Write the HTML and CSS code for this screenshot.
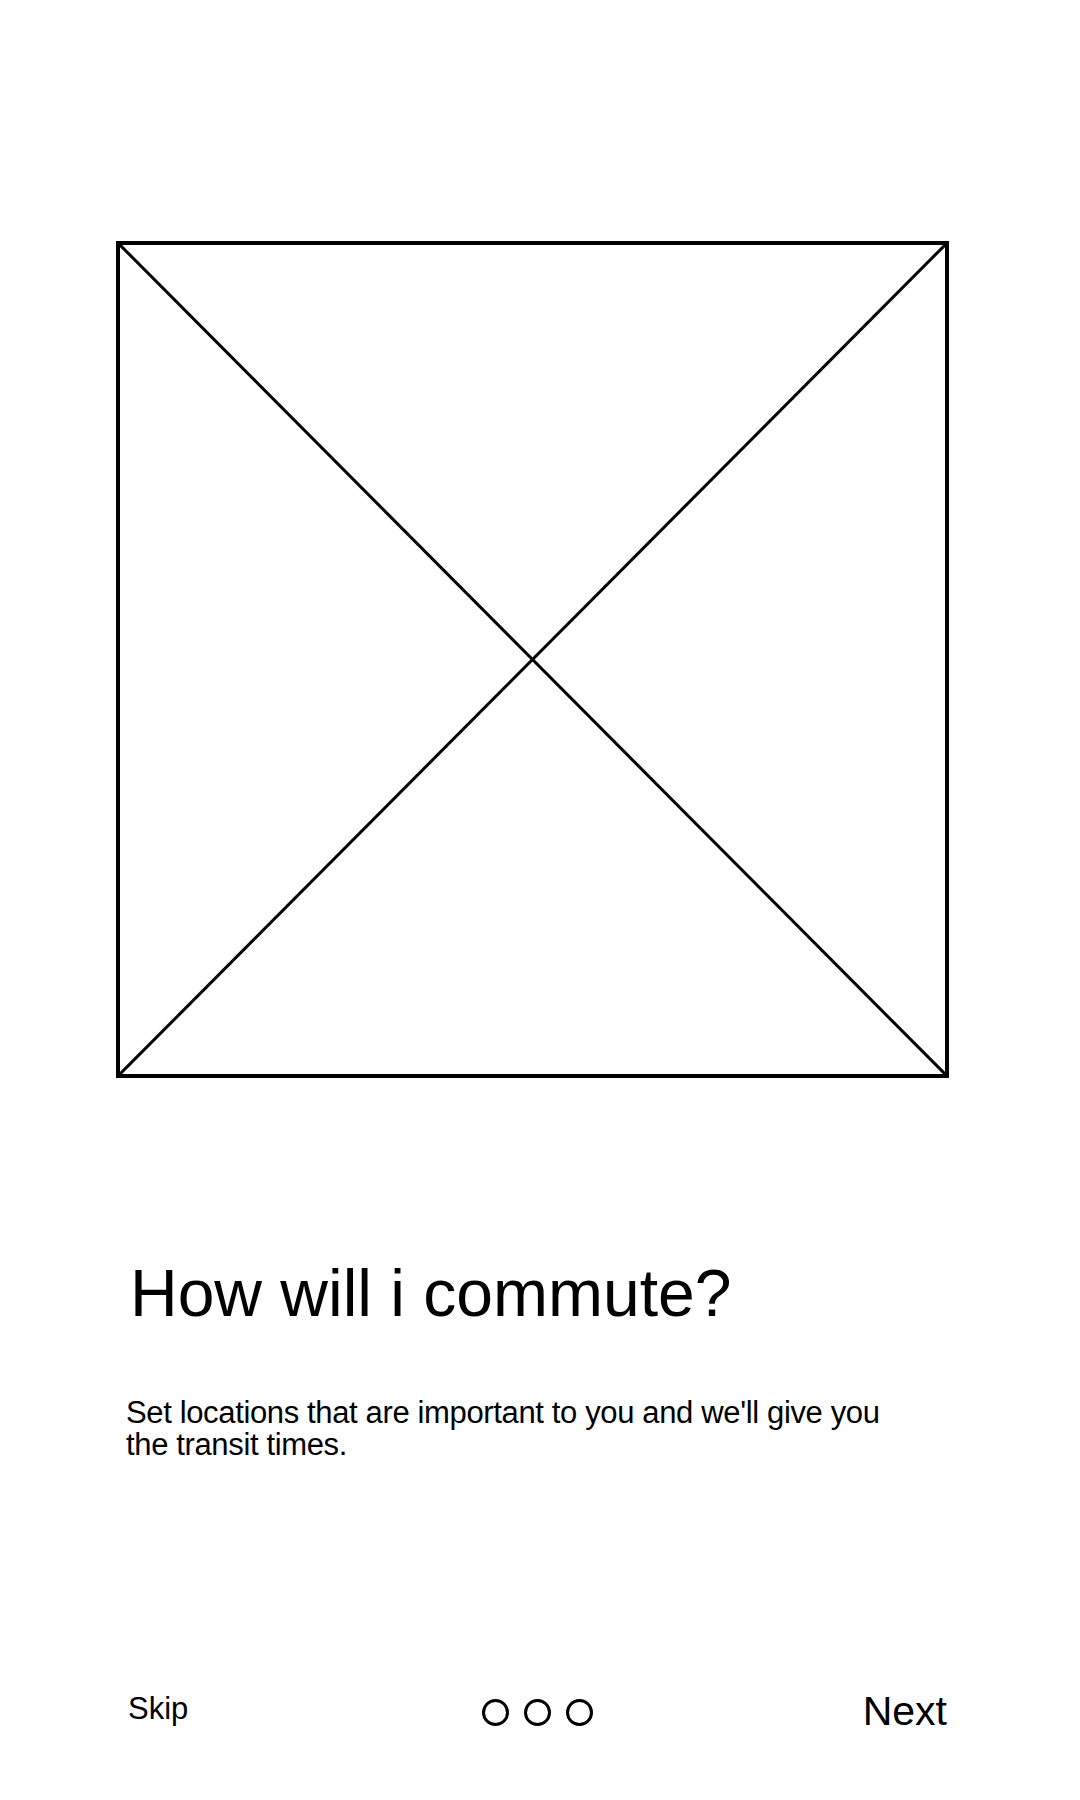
FILE: index.html
```html
<!DOCTYPE html>
<html lang="en">
<head>
<meta charset="utf-8">
<title>How will i commute?</title>
<link rel="stylesheet" href="styles.css">
</head>
<body>
<main class="screen">
  <div class="placeholder">
    <svg class="cross" viewBox="0 0 100 100" preserveAspectRatio="none">
      <line x1="0" y1="0" x2="100" y2="100" vector-effect="non-scaling-stroke"/>
      <line x1="100" y1="0" x2="0" y2="100" vector-effect="non-scaling-stroke"/>
    </svg>
  </div>
  <h1 class="title">How will i commute?</h1>
  <p class="desc">Set locations that are important to you and we'll give you<br>the transit times.</p>
  <footer class="footer">
    <span class="skip">Skip</span>
    <div class="dots"><span class="dot"></span><span class="dot"></span><span class="dot"></span></div>
    <span class="next">Next</span>
  </footer>
</main>
</body>
</html>
```

FILE: styles.css
```css
html, body {
  margin: 0;
  padding: 0;
  background: #fff;
}
body {
  font-family: "Liberation Sans", Arial, sans-serif;
  color: #000;
  width: 1080px;
  height: 1800px;
  overflow: hidden;
}
.screen {
  display: flex;
  flex-direction: column;
}
.placeholder {
  margin: 241px 0 0 116px;
  width: 833px;
  height: 837px;
  border: 4px solid #000;
  box-sizing: border-box;
}
.cross {
  display: block;
  width: 100%;
  height: 100%;
}
.cross line {
  stroke: #000;
  stroke-width: 3;
}
.title {
  margin: 182px 0 0 130px;
  font-size: 66px;
  line-height: 66px;
  font-weight: normal;
}
.desc {
  margin: 71px 0 0 126px;
  font-size: 31px;
  line-height: 32px;
  letter-spacing: -0.36px;
}
.footer {
  margin-top: 228px;
  height: 50px;
  padding: 0 133px 0 128px;
  display: grid;
  grid-template-columns: 1fr auto 1fr;
  align-items: start;
}
.skip {
  margin-top: 4px;
  font-size: 31px;
  line-height: 31px;
  justify-self: start;
}
.next {
  margin-top: 2px;
  font-size: 41px;
  line-height: 41px;
  justify-self: end;
}
.dots {
  margin-top: 10px;
  display: flex;
  gap: 15px;
}
.dot {
  width: 27px;
  height: 27px;
  border: 3px solid #000;
  border-radius: 50%;
  box-sizing: border-box;
}
```
